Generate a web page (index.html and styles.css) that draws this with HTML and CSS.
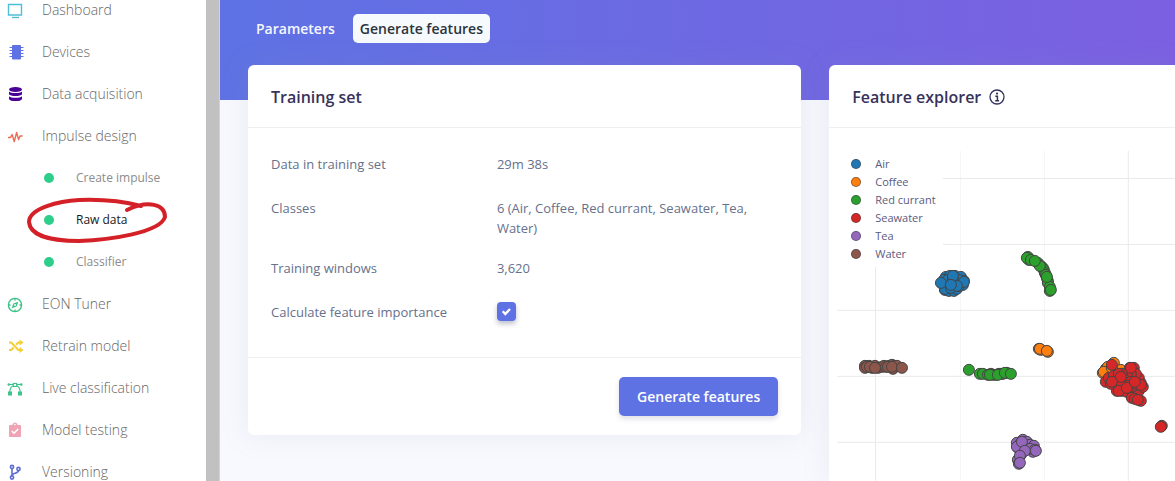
FILE: index.html
```html
<!DOCTYPE html>
<html lang="en">
<head>
<meta charset="utf-8">
<title>Raw data - Generate features</title>
<link rel="stylesheet" href="styles.css">
</head>
<body>
<div class="app">
  <nav class="sidebar" aria-label="Project">
    <ul class="menu">
      <li><a class="item" href="#dashboard"><svg class="icon" viewBox="0 0 16 16" fill="none" stroke="#4fbfd9"><path d="M1.500 2.500h13v10.500h-13z" stroke-width="1.400"/><path d="M5 15.500h7" stroke-width="1.400"/></svg>Dashboard</a></li>
      <li><a class="item" href="#devices"><svg class="icon" viewBox="0 0 16 16"><rect x="5" y="1" width="9" height="14.500" rx="1" fill="#5e72e4"/><path d="M2.500 3.500h14M2.500 6.500h14M2.500 9.500h14M2.500 12.500h14" stroke="#5e72e4"/></svg>Devices</a></li>
      <li><a class="item" href="#data"><svg class="icon" viewBox="0 0 16 16" fill="#4b0097"><ellipse cx="8.500" cy="3.500" rx="6.500" ry="2.400"/><path d="M2 5.500c2 2 11 2 13 0v2.700c-1 2.400-12 2.400-13 0zM2 10.200c2 2 11 2 13 0v2.700c-1 2.900-12 2.900-13 0z"/></svg>Data acquisition</a></li>
      <li><a class="item" href="#impulse"><svg class="icon" viewBox="0 0 16 16" fill="none" stroke="#ec6b56" stroke-width="1.400" stroke-linejoin="round" stroke-linecap="round"><path d="M1.500 9.500h2l1.600-3 2.200 7.200L9.600 4.500l2 7 1.500-3.500h2"/></svg>Impulse design</a>
        <ul class="submenu">
          <li><a class="subitem" href="#create"><span class="dot"></span>Create impulse</a></li>
          <li><a class="subitem current" href="#raw" aria-current="page"><span class="dot"></span>Raw data
            <svg class="marker" viewBox="0 0 142 48" fill="none" stroke="#d42027" stroke-linecap="round" aria-hidden="true"><path d="M115 9C100 5 78 2 53 3C34 4 3 11 3 25C4 39 26 44 53 44C82 43 134 36 139 20C139 7 122 3 101 13" stroke-width="4"/></svg></a></li>
          <li><a class="subitem" href="#classifier"><span class="dot"></span>Classifier</a></li>
        </ul>
      </li>
      <li><a class="item" href="#tuner"><svg class="icon" viewBox="0 0 16 16" fill="none" stroke="#36c283" stroke-width="1.300"><circle cx="8" cy="9" r="6.600"/><path d="M8 2.500v2M8 13.500v2M1.500 9h2M12.500 9h2"/><path d="M11.300 5.700 9.600 10.500 4.700 12.300 6.400 7.500z" fill="#36c283" stroke="none"/><circle cx="8" cy="9" r="1" fill="#fff" stroke="none"/></svg>EON Tuner</a></li>
      <li><a class="item" href="#retrain"><svg class="icon" viewBox="0 0 16 16" fill="none" stroke="#f3cf32" stroke-width="2"><path d="M2 4.500h2.300l7 7.500H13.500M2 12h2.300l2.300-2.500M9 6.800l2.300-2.300H13.500"/><path d="M12.500 1.500 16.500 4.500 12.500 7.500zM12.500 9 16.500 12 12.500 15z" fill="#f3cf32" stroke="none"/></svg>Retrain model</a></li>
      <li><a class="item" href="#live"><svg class="icon" viewBox="0 0 16 16" fill="none" stroke="#3cc48a" stroke-width="1.200"><path d="M2.800 12C3 8 5 5.500 8 5.500s5 2.500 5.200 6.500M2 4.500h12"/><g fill="#3cc48a" stroke="none"><rect x="1" y="11.500" width="4" height="4"/><rect x="11" y="11.500" width="4" height="4"/><circle cx="1.800" cy="4.500" r="1.300"/><circle cx="14.200" cy="4.500" r="1.300"/></g><rect x="6.300" y="3.500" width="3.400" height="3" fill="#fff"/></svg>Live classification</a></li>
      <li><a class="item" href="#testing"><svg class="icon" viewBox="0 0 16 16"><path d="M3 3h2.500c0-3.500 5-3.500 5 0H13a1 1 0 0 1 1 1v10a1 1 0 0 1-1 1H3a1 1 0 0 1-1-1V4a1 1 0 0 1 1-1z" fill="#efa3b5"/><path d="m4.800 9 2.200 2.200 4.200-4.200" fill="none" stroke="#fff" stroke-width="1.600"/><circle cx="8" cy="2.600" r=".8" fill="#fff"/></svg>Model testing</a></li>
      <li><a class="item" href="#versioning"><svg class="icon" viewBox="0 0 16 16" fill="none" stroke="#5f6fcf" stroke-width="1.600"><circle cx="5" cy="3" r="1.600"/><circle cx="5" cy="13.500" r="1.600"/><circle cx="11.500" cy="5" r="1.600"/><path d="M5 4.600v7.300M11.500 6.600c0 3.600-6.500 1.800-6.500 5"/></svg>Versioning</a></li>
    </ul>
  </nav>
  <div class="divider"></div>
  <main class="main">
    <div class="tabs">
      <a class="tab" href="#parameters">Parameters</a>
      <a class="tab selected" href="#generate" aria-current="page">Generate features</a>
    </div>
    <div class="cards">
      <section class="card">
        <h2 class="card-title">Training set</h2>
        <dl class="facts">
          <dt>Data in training set</dt><dd>29m 38s</dd>
          <dt>Classes</dt><dd>6 (Air, Coffee, Red currant, Seawater, Tea, Water)</dd>
          <dt>Training windows</dt><dd>3,620</dd>
          <dt><label for="importance">Calculate feature importance</label></dt><dd class="check-cell"><input class="check" type="checkbox" id="importance" checked></dd>
        </dl>
        <div class="card-footer"><button class="primary" type="button">Generate features</button></div>
      </section>
      <section class="card explorer">
        <h2 class="card-title">Feature explorer
          <svg class="info" viewBox="0 0 16 16" fill="none" stroke="#32325d"><circle cx="8" cy="8" r="7" stroke-width="1.300"/><path d="M6.300 7.200H8.400V11.500M6.200 11.700h3.900" stroke-width="1.500"/><circle cx="8" cy="4.600" r="1.100" fill="#32325d" stroke="none"/></svg>
        </h2>
        <div class="chart">
          <svg class="plot" viewBox="829 128 346 353" role="img" aria-label="Scatter plot of features by class">
            <g class="grid"><path d="M960.500 151V481M1044.500 151V481" class="faint"/><path d="M875.500 151V481M1128.500 151V481M837 178.500H1175M837 244.500H1175M837 310.500H1175M837 376.500H1175M837 442.500H1175"/></g>
            <g id="points" class="points"></g>
          </svg>
          <ul class="legend">
            <li><span class="swatch air"></span>Air</li>
            <li><span class="swatch coffee"></span>Coffee</li>
            <li><span class="swatch currant"></span>Red currant</li>
            <li><span class="swatch seawater"></span>Seawater</li>
            <li><span class="swatch tea"></span>Tea</li>
            <li><span class="swatch water"></span>Water</li>
          </ul>
        </div>
      </section>
    </div>
  </main>
</div>
<script src="plot.js"></script>
</body>
</html>
```
FILE: plot.js
```js
const series = [
  ["#1f77b4", [[946,277],[950,276],[955,276],[961,277],[944,280],[948,280],[964,281],[959,280],[945,290],[949,291],[954,291],[957,289],[963,285],[947,287],[953,280],[959,286],[964,282],[945,289],[951,288],[957,286],[941,283],[953,276],[951,285]]],
  ["#ff7f0e", [[1039,349],[1041,350],[1048,352],[1040,349],[1047,351],[1103,373],[1106,369],[1108,367],[1114,363],[1104,372],[1121,370],[1112,368]]],
  ["#2ca02c", [[1028,257],[1029,260],[1027,258],[1031,260],[1038,263],[1041,266],[1043,268],[1044,270],[1045,273],[1046,275],[1047,278],[1048,281],[1048,283],[1050,287],[1050,291],[1040,266],[1035,261],[1047,277],[1051,290],[969,370],[980,374],[983,374],[988,375],[991,374],[993,375],[996,375],[999,374],[1001,374],[1003,374],[1007,373],[990,375],[998,375],[1005,373],[1011,374]]],
  ["#d62728", [[1130,368],[1134,368],[1106,382],[1109,378],[1112,382],[1116,385],[1117,391],[1122,391],[1127,392],[1131,389],[1136,390],[1139,391],[1143,387],[1141,383],[1139,378],[1136,374],[1131,374],[1127,375],[1122,374],[1125,380],[1131,382],[1134,386],[1128,386],[1120,384],[1114,376],[1119,374],[1111,384],[1136,384],[1121,377],[1112,382],[1119,391],[1127,388],[1141,385],[1135,382],[1131,368],[1132,398],[1135,399],[1141,401],[1138,400],[1112,365],[1162,426],[1161,427]]],
  ["#9467bd", [[1023,440],[1027,442],[1017,443],[1021,443],[1030,445],[1034,446],[1018,448],[1027,449],[1033,452],[1021,455],[1030,449],[1017,447],[1022,442],[1035,450],[1025,451],[1018,460],[1020,456],[1019,464],[1036,451],[1020,463]]],
  ["#8c564b", [[865,366],[865,368],[869,366],[872,368],[875,366],[878,368],[882,367],[884,366],[886,367],[889,366],[892,365],[895,366],[893,369],[897,366],[867,367],[870,367],[875,368],[888,367],[892,367],[902,368]]]
];

const layer = document.getElementById("points");
for (const [color, points] of series) {
  for (const [x, y] of points) {
    const dot = document.createElementNS("http://www.w3.org/2000/svg", "circle");
    dot.setAttribute("cx", x);
    dot.setAttribute("cy", y);
    dot.setAttribute("r", 5.5);
    dot.setAttribute("fill", color);
    layer.append(dot);
  }
}
```
FILE: styles.css
```css
* { box-sizing: border-box; }
body {
  margin: 0;
  overflow: hidden;
  background: #f8f9fe;
  font: 13px/20px "Open Sans", "Noto Sans", sans-serif;
  color: #66718c;
}
ul, dl, dd, h2 { margin: 0; padding: 0; }
ul { list-style: none; }
a { color: inherit; text-decoration: none; }

.app { display: flex; height: 100vh; overflow: hidden; }

.sidebar { flex: 0 0 206px; background: #fff; color: #8c8c8c; }
.menu { margin-top: -11px; }
.item { display: flex; align-items: center; gap: 19px; height: 42px; padding-left: 7px; color: #666; font-size: 14px; font-weight: 300; }
.icon { width: 16px; height: 16px; overflow: visible; }
.subitem { position: relative; display: flex; align-items: center; gap: 22px; height: 42px; padding-left: 44px; font-size: 12px; }
.current { color: #1a1a1a; }
.dot { width: 10px; height: 10px; border-radius: 50%; background: #2dce89; }
.marker { position: absolute; left: 26px; top: -2px; width: 142px; height: 48px; }
.divider { flex: 0 0 14px; background: #c1c1c1; border-right: 1px solid #d2d2dc; }

.main {
  flex: 1;
  min-width: 0;
  display: flex;
  flex-direction: column;
  padding-left: 28px;
  background: linear-gradient(87deg, #5e72e4, #7c60e2) top / 100% 100px no-repeat;
}
.tabs { display: flex; gap: 11px; padding: 14px 0 22px 1px; }
.tab { padding: 4px 7px; border-radius: 5px; color: #f7f8ff; font-size: 14px; font-weight: 600; line-height: 21px; }
.selected { background: #f7fafc; color: #2b343c; }

.cards { flex: 1; display: grid; grid-template-columns: 8fr 5fr; gap: 28px; align-items: start; }
.card { min-width: 0; background: #fff; border-radius: 6px; box-shadow: 0 0 28px rgba(136, 152, 170, .15); }
.card-title {
  display: flex;
  align-items: center;
  gap: 8px;
  height: 63px;
  padding: 1px 23px 0;
  border-bottom: 1px solid #eeeff2;
  color: #38325a;
  font-size: 16px;
  font-weight: 600;
}
.facts {
  display: grid;
  grid-template-columns: 4fr 5fr;
  row-gap: 20px;
  padding: 26px 22px 31px 23px;
}
.facts dt { min-height: 24px; }
.check-cell { display: flex; }
.check {
  appearance: none;
  width: 19px;
  height: 19px;
  margin: 0;
  border-radius: 4px;
  background: #5e72e4;
  box-shadow: 0 3px 5px rgba(50, 50, 93, .3);
}
.check:checked::before {
  content: "";
  display: block;
  width: 9px;
  height: 8px;
  margin: 6px 5px;
  background: #fff;
  clip-path: polygon(0 50%, 18% 32%, 38% 54%, 82% 4%, 100% 22%, 38% 96%);
}
.card-footer { display: flex; justify-content: flex-end; padding: 19px 23px; border-top: 1px solid #eeeff2; }
.primary {
  height: 39px;
  padding: 0 18px;
  border: 0;
  border-radius: 5px;
  background: #5e72e4;
  box-shadow: 0 3px 5px rgba(50, 50, 93, .15);
  color: #fff;
  font: 600 14px/20px "Open Sans", "Noto Sans", sans-serif;
}

.explorer { align-self: stretch; border-radius: 6px 0 0 0; }
.info { width: 16px; height: 16px; }
.chart { position: relative; }
.plot { display: block; width: 100%; }
.grid { stroke: #eaeaea; }
.faint { stroke: #f4f4f4; }
.points { stroke: #444; stroke-width: 1; }
.legend { position: absolute; left: 8px; top: 22px; width: 106px; padding: 5px 0 4px 14px; background: #fff; color: #5b5b80; font-size: 11px; line-height: 18px; }
.legend li { display: flex; align-items: center; gap: 14px; }
.swatch { width: 10px; height: 10px; border: 1px solid rgba(68, 68, 68, .6); border-radius: 50%; }
.air { background: #1f77b4; }
.coffee { background: #ff7f0e; }
.currant { background: #2ca02c; }
.seawater { background: #d62728; }
.tea { background: #9467bd; }
.water { background: #8c564b; }
```
